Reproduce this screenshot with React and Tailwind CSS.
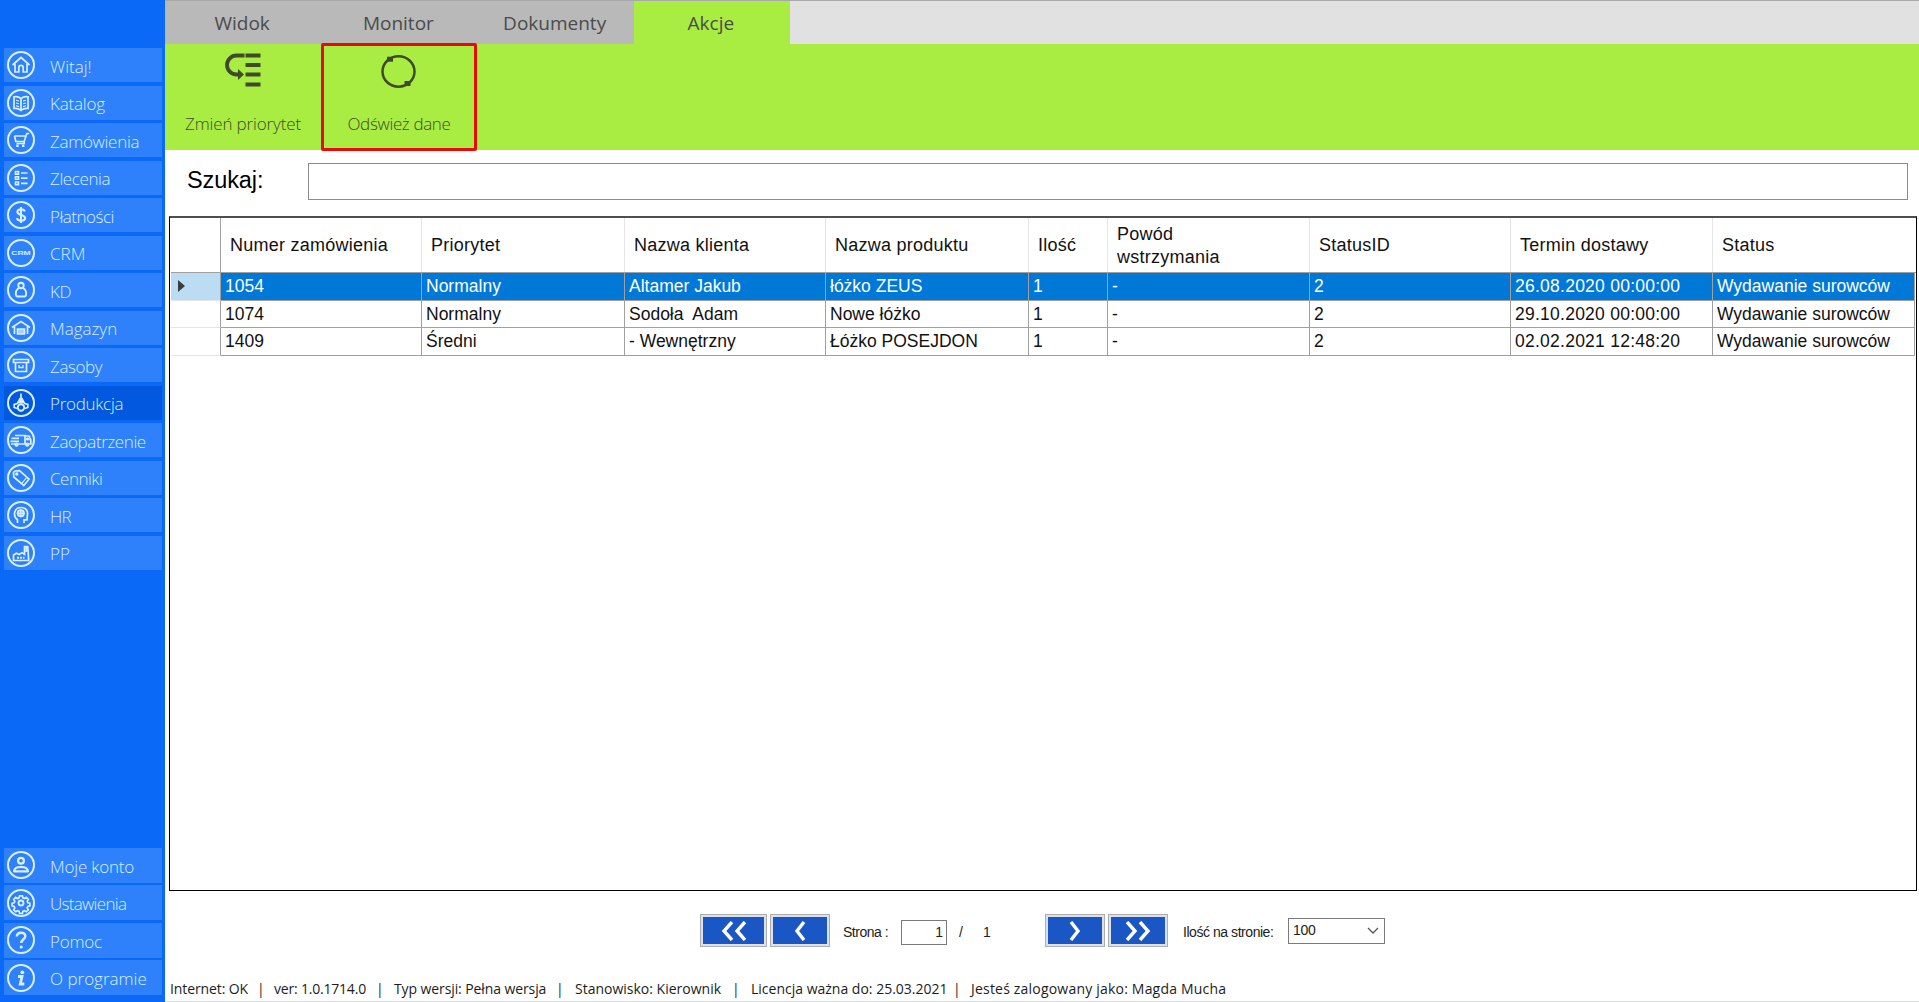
const mainMenu = [
   { icon: "home", label: "Witaj!", cls: "tracking-normal" },
   { icon: "book", label: "Katalog", cls: "tracking-[-0.2px]" },
   { icon: "cart", label: "Zamówienia", cls: "tracking-[-0.3px]" },
   { icon: "list", label: "Zlecenia", cls: "tracking-[-0.4px]" },
   { icon: "dollar", label: "Płatności", cls: "tracking-[-0.5px]" },
   { icon: "crm", label: "CRM", cls: "tracking-normal" },
   { icon: "client", label: "KD", cls: "tracking-[-0.5px]" },
   { icon: "warehouse", label: "Magazyn", cls: "tracking-normal" },
   { icon: "box", label: "Zasoby", cls: "tracking-[-0.4px]" },
   { icon: "production", label: "Produkcja", cls: "tracking-[-0.3px]", active: true },
   { icon: "truck", label: "Zaopatrzenie", cls: "tracking-[-0.4px]" },
   { icon: "tag", label: "Cenniki", cls: "tracking-[-0.5px]" },
   { icon: "head", label: "HR", cls: "tracking-[-0.8px]" },
   { icon: "factory", label: "PP", cls: "tracking-normal" },
];

const bottomMenu = [
   { icon: "user", label: "Moje konto", cls: "tracking-[-0.2px]" },
   { icon: "gear", label: "Ustawienia", cls: "tracking-[-0.7px]" },
   { icon: "help", label: "Pomoc", cls: "tracking-[-0.2px]" },
   { icon: "info", label: "O programie", cls: "tracking-normal" },
];

const tabs = ["Widok", "Monitor", "Dokumenty", "Akcje"];

const columns = [
   "Numer zamówienia",
   "Priorytet",
   "Nazwa klienta",
   "Nazwa produktu",
   "Ilość",
   "Powód wstrzymania",
   "StatusID",
   "Termin dostawy",
   "Status",
];

const rows = [
   ["1054", "Normalny", "Altamer Jakub", "łóżko ZEUS", "1", "-", "2", "26.08.2020 00:00:00", "Wydawanie surowców"],
   ["1074", "Normalny", "Sodoła  Adam", "Nowe łóżko", "1", "-", "2", "29.10.2020 00:00:00", "Wydawanie surowców"],
   ["1409", "Średni", "- Wewnętrzny", "Łóżko POSEJDON", "1", "-", "2", "02.02.2021 12:48:20", "Wydawanie surowców"],
];

const dateColumn = 7;

const gridCols = "grid grid-cols-[50px_201px_203px_201px_203px_79px_202px_201px_202px_202px]";

const glyphs = {
   home: (
      <>
         <path d="M5.500 14 14 6.500l8.500 7.500" />
         <path d="M8 12.500v8.500h3.800v-4.500a2.200 2.200 0 0 1 4.400 0v4.500H20v-8.500" />
      </>
   ),
   book: (
      <>
         <path d="M14 9.500v12M14 9.500c-2-1.800-4.500-2-7-1.700v11.700c2.500-.3 5 .1 7 2 2-1.900 4.500-2.300 7-2V7.800c-2.500-.3-5-.1-7 1.700" />
         <path d="M9 11.200l3 .8M9 14l3 .8M9 16.800l3 .8M19 11.200l-3 .8M19 14l-3 .8M19 16.800l-3 .8" strokeWidth="1.100" />
      </>
   ),
   cart: (
      <>
         <path d="M7.500 10H18M7.500 10l1.300 5.500h8.400L19.800 7.500h2.400M17.200 15.500v2H9.500" />
         <path d="M9.300 18.500h2.400v2.400H9.300zM15 18.500h2.400v2.400H15z" fill="currentColor" stroke="none" />
      </>
   ),
   list: (
      <>
         <path d="M8.500 7.500h3v2.600h-3zM8.500 12.700h3v2.600h-3zM8.500 18h3v2.600h-3z" strokeWidth="1.600" />
         <path d="M14 9h6.500M14 14.200h6.500M14 19.400h6.500" />
      </>
   ),
   dollar: (
      <path
         d="M17.800 10.600c-.4-1.500-1.800-2.300-3.700-2.300-2.200 0-3.700 1-3.700 2.700 0 3.900 7.700 2.100 7.700 6.100 0 1.700-1.600 2.700-3.900 2.700-2.300 0-3.900-.9-4.200-2.700M14 6v16"
         strokeWidth="2.100"
      />
   ),
   crm: (
      <text
         x="14"
         y="16.200"
         textAnchor="middle"
         fontSize="6.200"
         fontWeight="700"
         fill="currentColor"
         stroke="none"
         textLength="19.500"
         lengthAdjust="spacingAndGlyphs"
         fontFamily="Liberation Sans, sans-serif"
      >
         CRM
      </text>
   ),
   client: (
      <>
         <circle cx="14" cy="9.500" r="2.700" strokeWidth="1.900" />
         <path d="M11.800 12c-2 1.200-3 3.300-3 5.800 0 1.800.6 2.700 1.800 2.700h6.800c1.200 0 1.800-.9 1.800-2.700 0-2.500-1-4.600-3-5.800" strokeWidth="1.900" />
      </>
   ),
   warehouse: (
      <>
         <path d="M5 13.500 14 7.500l9 6M7.500 12.500v7.500M20.500 12.500v7.500" />
         <path d="M10.500 15h7v5h-7z" fill="currentColor" fillOpacity=".7" />
      </>
   ),
   box: (
      <>
         <path d="M6.500 8.500h15v3h-15zM8.500 11.500h11V20.500h-11z" />
         <path d="M12 14v2.500h4V14" strokeWidth="1.300" />
      </>
   ),
   production: (
      <>
         <path d="M14 4.500v6M13 9.500h2l2 4h-6z" fill="currentColor" />
         <path d="M11.200 14.300l-4 1.200v3l3 1M16.800 14.300l4 1.200v3l-3 1" strokeWidth="1.700" />
         <circle cx="14" cy="18.500" r="3.200" strokeWidth="1.900" />
      </>
   ),
   truck: (
      <>
         <path d="M8 9.500h10v8.500H7M18 10h4l1.800 4v4H18M4.500 12.300H12M3.500 15.300H12M4 18h6" />
         <path d="M19.500 12h2l1 2h-3z" fill="currentColor" strokeWidth=".8" />
         <circle cx="9.500" cy="18.700" r="1.300" />
         <circle cx="20.200" cy="18.700" r="1.300" />
      </>
   ),
   tag: (
      <>
         <path d="M6.500 8.500 8 7l4.500-.3 9.500 8.500-5.200 6.300-10-8.500z" />
         <path d="M14.800 19.400l5-6" strokeWidth="1.100" />
         <circle cx="9.800" cy="10" r=".9" />
      </>
   ),
   head: (
      <>
         <path d="M10.500 22v-3.200C5.500 15 7 6.500 14 6.500c5.500 0 7.200 4 6.300 8l-.3 4.300h-3V22" />
         <circle cx="13.800" cy="12.300" r="3.200" fill="currentColor" fillOpacity=".5" />
         <path d="M13.800 8.300v8M9.800 12.300h8" strokeWidth="1.200" />
      </>
   ),
   factory: (
      <>
         <path d="M6.500 21.500V16l3-1.800 2.500 1.300 3-1.800 2.500 1.500V7.500h3.300l.9 14z" />
         <path d="M10 18.700h7.500" strokeWidth="2" strokeDasharray="2 1" />
         <path d="M18.300 8h2v5h-2z" fill="currentColor" stroke="none" />
      </>
   ),
   user: (
      <>
         <circle cx="14" cy="9.700" r="2.900" strokeWidth="2.200" />
         <path d="M7 20.300c.3-3.200 3-4.300 7-4.300s6.700 1.100 7 4.300z" strokeWidth="2.200" strokeLinejoin="round" />
      </>
   ),
   gear: (
      <>
         <circle cx="14" cy="14" r="2.500" strokeWidth="1.800" />
         <path d="M12.600 6.800h2.800l.5 2 1.600.7 1.800-1.100 2 2-1.100 1.800.7 1.500 2 .6v2.600l-2 .5-.7 1.600 1.100 1.800-2 2-1.800-1.100-1.600.7-.5 2h-2.800l-.5-2-1.600-.7-1.800 1.100-2-2 1.100-1.800-.7-1.600-2-.5v-2.600l2-.6.7-1.500-1.100-1.800 2-2 1.800 1.100 1.600-.7z" />
      </>
   ),
   help: (
      <>
         <path d="M9.800 10.500c.2-2.400 1.800-3.800 4.300-3.800 2.400 0 4.200 1.400 4.200 3.500 0 3-4 3.200-4 6.800" strokeWidth="2.400" />
         <circle cx="14.200" cy="21" r="1.600" fill="currentColor" stroke="none" />
      </>
   ),
   info: (
      <>
         <circle cx="15.300" cy="8.300" r="1.900" fill="currentColor" stroke="none" />
         <path d="M11 12.500h4l-1.700 7.500h4" strokeWidth="2.800" />
      </>
   ),
};

function MenuIcon({ name }) {
   return (
      <svg
         viewBox="0 0 28 28"
         className="h-7 w-7 shrink-0 text-[#d8f0ff]"
         fill="none"
         stroke="currentColor"
         strokeWidth="1.700"
      >
         <circle cx="14" cy="14" r="13" strokeWidth="2" />
         {glyphs[name]}
      </svg>
   );
}

function MenuItem({ item, className }) {
   return (
      <div
         className={`flex w-[158px] items-center pl-[3px] ${className} ${item.active ? "bg-[#0258de]" : "bg-[#2e81fb]"}`}
      >
         <MenuIcon name={item.icon} />
         <span className={`pl-[15px] pt-[3px] text-[17px] leading-6 font-light whitespace-nowrap text-[#d8f0ff] ${item.cls}`}>
            {item.label}
         </span>
      </div>
   );
}

function Sidebar() {
   return (
      <nav className="flex w-[165px] shrink-0 flex-col bg-[#0a69f7] pt-12 pb-[7px] pl-1">
         <div className="flex flex-col gap-[3.500px]">
            {mainMenu.map((item) => (
               <MenuItem key={item.label} item={item} className="h-[34px]" />
            ))}
         </div>
         <div className="mt-auto flex flex-col gap-[2.500px]">
            {bottomMenu.map((item) => (
               <MenuItem key={item.label} item={item} className="h-[35px]" />
            ))}
         </div>
      </nav>
   );
}

function Tabs() {
   return (
      <div className="flex h-11 border-t border-[#a8a8a8] bg-[#e1e1e1]">
         {tabs.map((tab) => (
            <div
               key={tab}
               className={`flex w-[156.250px] items-center justify-center pt-px pr-[2px] text-[19px] text-[#4b4b4b] ${
                  tab === "Akcje" ? "bg-[#a9ed43]" : "bg-[#b9b9b9]"
               }`}
            >
               {tab}
            </div>
         ))}
      </div>
   );
}

function Ribbon() {
   return (
      <div className="flex h-[106px] bg-[#a9ed43]">
         <div className="flex w-[156px] flex-col items-center pt-[9px] text-[#3f4a2c]">
            <svg viewBox="0 0 36 34" className="h-[34px] w-9" fill="none" stroke="currentColor" strokeWidth="3.800">
               <path d="M20.500 2.500h15M20.500 12h15M20.500 21.500h15M20.500 31.500h15" />
               <path d="M19.500 2.500h-8a9.500 9.500 0 0 0 0 19h3" />
               <path d="M13 16l6 5.500-6 5.500z" fill="currentColor" stroke="none" />
            </svg>
            <span className="pt-[25px] text-[17px] leading-6 font-light tracking-[-0.150px]">Zmień priorytet</span>
         </div>
         <div className="-my-px flex w-[156px] flex-col items-center rounded-[2px] border-3 border-[#e60c0c] pt-[8px] text-[#3f4a2c]">
            <svg viewBox="0 0 36 34" className="h-[34px] w-9" fill="none" stroke="currentColor" strokeWidth="2.500">
               <ellipse cx="17.500" cy="17.500" rx="16" ry="15.200" />
               <path d="M6 2.800h6v5H6zM23.500 27h6v5h-6z" fill="currentColor" stroke="none" />
            </svg>
            <span className="pt-[24px] text-[17px] leading-6 font-light tracking-[-0.350px]">Odśwież dane</span>
         </div>
      </div>
   );
}

function SearchBar() {
   return (
      <div className="flex h-[66px] items-center pr-[11px] pb-[4px] pl-[22px] font-['Liberation_Sans',sans-serif]">
         <span className="w-[121px] text-[23.500px] tracking-[-0.1px] text-black">Szukaj:</span>
         <div className="h-[37px] flex-1 border border-[#8a8a8a] bg-white" />
      </div>
   );
}

function DataGrid() {
   return (
      <div className="mr-[2px] ml-1 h-[675px] border border-t-2 border-black border-t-[#4d4f4d] pl-px font-['Liberation_Sans',sans-serif] text-[17.500px] text-[#111]">
         <div className={`${gridCols} h-[55px] border-b border-[#a0a0a0] text-[18px] tracking-[0.250px]`}>
            <div className="border-r border-[#a0a0a0]" />
            {columns.map((name) => (
               <div key={name} className="flex items-center border-r border-[#e5e5e5] px-[9px] pt-px leading-[23px] last:border-r-0">
                  <span className={name === "Powód wstrzymania" ? "w-30" : "whitespace-nowrap"}>{name}</span>
               </div>
            ))}
         </div>
         {rows.map((row, index) => (
            <div key={row[0]} className={`${gridCols} h-[27.500px]`}>
               <div
                  className={`flex items-center border-r border-b border-r-[#a0a0a0] border-b-[#e5e5e5] pl-[7px] ${
                     index === 0 ? "bg-[#bcdcf4]" : ""
                  }`}
               >
                  {index === 0 && (
                     <svg viewBox="0 0 7 12" className="h-3 w-[7px]" fill="#3c3c3c">
                        <path d="M0 0l7 6-7 6z" />
                     </svg>
                  )}
               </div>
               {row.map((cell, i) => (
                  <div
                     key={i}
                     className={`flex items-center border-r border-b border-[#a0a0a0] pl-1 whitespace-pre ${
                        index === 0 ? "bg-[#0078d7] text-white" : ""
                     } ${i === dateColumn ? "tracking-[0.250px]" : ""}`}
                  >
                     {cell}
                  </div>
               ))}
            </div>
         ))}
      </div>
   );
}

function PagerButton({ children, className }) {
   return (
      <div className={`flex h-[33px] border border-[#adadad] bg-[#dbe2ec] p-[2px] ${className}`}>
         <div className="flex flex-1 items-center justify-center bg-[#1a57c4]">
            <svg viewBox="0 0 28 20" className="h-5 w-7" fill="none" stroke="white" strokeWidth="3.400">
               {children}
            </svg>
         </div>
      </div>
   );
}

function Pager() {
   return (
      <div className="flex h-[33px] items-center pl-[535px] font-['Liberation_Sans',sans-serif] text-[14px] text-[#222]">
         <PagerButton className="w-[67px]">
            <path d="M12 1 4 10l8 9M25 1l-8 9 8 9" />
         </PagerButton>
         <PagerButton className="ml-[3px] w-[60px]">
            <path d="M18 1l-7 9 7 9" />
         </PagerButton>
         <span className="w-[71px] pt-1 pl-[13px] tracking-[-0.5px] whitespace-nowrap">Strona :</span>
         <div className="mt-[3px] flex h-[25px] w-[46px] items-center justify-end border border-[#7a7a7a] pr-[3px]">1</div>
         <span className="w-[36px] pt-1 pl-3">/</span>
         <span className="w-[62px] pt-1">1</span>
         <PagerButton className="w-[60px]">
            <path d="M10 1l7 9-7 9" />
         </PagerButton>
         <PagerButton className="ml-[3px] w-[60px]">
            <path d="M3 1l8 9-8 9M16 1l8 9-8 9" />
         </PagerButton>
         <span className="w-[120px] pt-1 pl-[15px] tracking-[-0.450px] whitespace-nowrap">Ilość na stronie:</span>
         <div className="flex h-[26px] w-[97px] items-center justify-between border border-[#7a7a7a] pr-[5px] pl-1">
            <span className="tracking-[-0.3px]">100</span>
            <svg viewBox="0 0 12 8" className="h-2 w-3" fill="none" stroke="#555" strokeWidth="1.300">
               <path d="M1 1l5 5 5-5" />
            </svg>
         </div>
      </div>
   );
}

function StatusBar() {
   return (
      <div className="mt-auto flex h-[26px] items-center border-b border-[#d0dde2] pl-[5px] text-[14px] whitespace-nowrap text-[#1c1c1c]">
         <span className="w-[87px] tracking-[-0.1px]">Internet: OK</span>
         <span className="w-[17px]">|</span>
         <span className="w-[102px] tracking-[-0.2px]">ver: 1.0.1714.0</span>
         <span className="w-[18px]">|</span>
         <span className="w-[162px] tracking-[-0.1px]">Typ wersji: Pełna wersja</span>
         <span className="w-[19px]">|</span>
         <span className="w-[157px]">Stanowisko: Kierownik</span>
         <span className="w-[19px]">|</span>
         <span className="w-[202px]">Licencja ważna do: 25.03.2021</span>
         <span className="w-[18px]">|</span>
         <span className="tracking-[0.2px]">Jesteś zalogowany jako: Magda Mucha</span>
      </div>
   );
}

export default function App() {
   return (
      <div className="flex h-screen w-full overflow-hidden bg-white font-['Open_Sans',sans-serif]">
         <Sidebar />
         <main className="flex min-w-0 flex-1 flex-col">
            <Tabs />
            <Ribbon />
            <SearchBar />
            <DataGrid />
            <div className="h-[23px]" />
            <Pager />
            <StatusBar />
         </main>
      </div>
   );
}
